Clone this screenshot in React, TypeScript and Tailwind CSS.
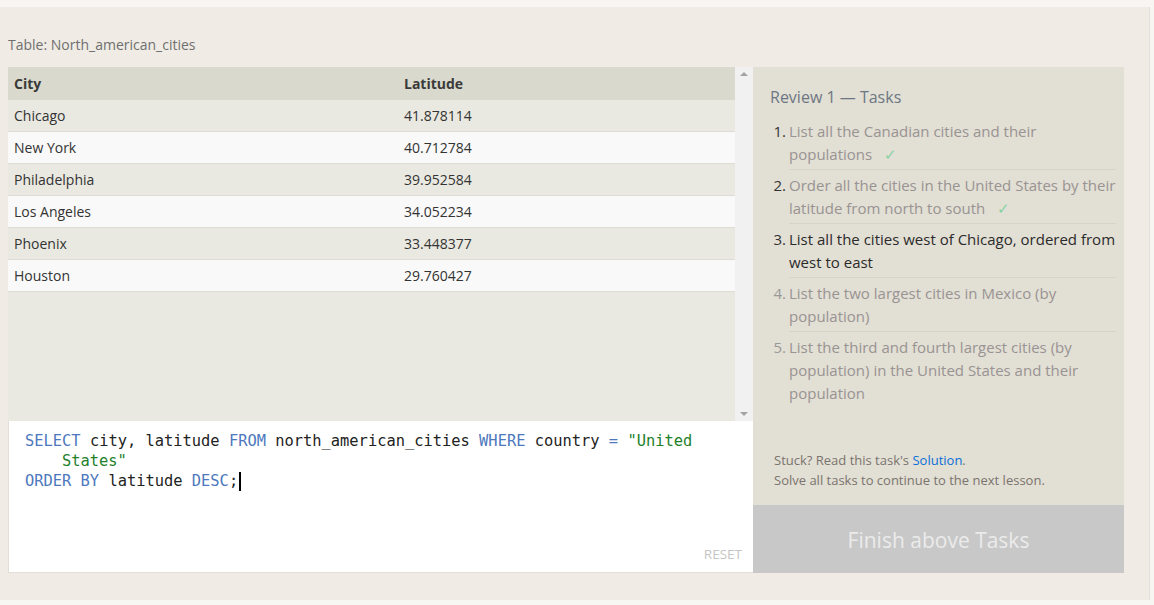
const rows = [
  ['Chicago', '41.878114'],
  ['New York', '40.712784'],
  ['Philadelphia', '39.952584'],
  ['Los Angeles', '34.052234'],
  ['Phoenix', '33.448377'],
  ['Houston', '29.760427'],
];

const tasks = [
  { text: 'List all the Canadian cities and their populations', done: true },
  { text: 'Order all the cities in the United States by their latitude from north to south', done: true },
  { text: 'List all the cities west of Chicago, ordered from west to east', active: true },
  { text: 'List the two largest cities in Mexico (by population)' },
  { text: 'List the third and fourth largest cities (by population) in the United States and their population' },
];

const kw = 'text-[#4d78bd]';
const str = 'text-[#23802a]';

export default function App() {
  return (
    <div className="h-[605px] w-full bg-[#f7f6f3] pt-[7px] font-['Segoe_UI','Open_Sans',sans-serif]">
      <div className="h-[593px] w-[1150px] border-r border-[#e3e0da] bg-[#f0ece5] pl-[8px]">
        <div className="h-[60px] pt-[28px] text-[14px] leading-[20px] text-[#6f6f6f]">
          Table: North_american_cities
        </div>

        <div className="flex">
          {/* left: results + editor */}
          <div className="w-[745px]">
            <div className="flex h-[354px]">
              <div className="w-[727px] bg-[#eae9e1]">
                <div className="flex h-[33px] items-center bg-[#dad9cd] text-[14px] font-bold text-[#3a3a3a]">
                  <div className="w-[396px] pl-[6px]">City</div>
                  <div>Latitude</div>
                </div>
                {rows.map(([city, lat], i) => (
                  <div
                    key={city}
                    className={`flex h-[32px] items-center border-b border-[#dedcd5] text-[14px] text-[#333] ${
                      i % 2 === 0 ? 'bg-[#eae9e1]' : 'bg-[#f9f9f9]'
                    }`}
                  >
                    <div className="w-[396px] pl-[6px]">{city}</div>
                    <div>{lat}</div>
                  </div>
                ))}
              </div>
              {/* scrollbar */}
              <div className="flex w-[18px] flex-col items-center justify-between bg-[#f1f1f1] py-[5px]">
                <div className="h-0 w-0 border-x-[4px] border-b-[4px] border-x-transparent border-b-[#a3a3a3]" />
                <div className="h-0 w-0 border-x-[4px] border-t-[4px] border-x-transparent border-t-[#a3a3a3]" />
              </div>
            </div>

            {/* editor */}
            <div className="relative h-[152px] border-b border-l border-[#e3dfd7] bg-white pl-[16px] pt-[10px] font-['DejaVu_Sans_Mono',monospace] text-[15.4px] leading-[20px] text-[#222]">
              <div>
                <span className={kw}>SELECT</span> city, latitude <span className={kw}>FROM</span> north_american_cities{' '}
                <span className={kw}>WHERE</span> country <span className={kw}>=</span>{' '}
                <span className={str}>"United</span>
              </div>
              <div className="pl-[37px]">
                <span className={str}>States"</span>
              </div>
              <div className="flex items-center">
                <span className={kw}>ORDER BY</span>&nbsp;latitude&nbsp;<span className={kw}>DESC</span>;
                <span className="ml-[1px] inline-block h-[19px] w-[2px] bg-black" />
              </div>
              <div className="absolute bottom-[8px] right-[11px] font-['Segoe_UI','Open_Sans',sans-serif] text-[13.5px] text-[#c6c6c6]">
                RESET
              </div>
            </div>
          </div>

          {/* right: tasks */}
          <div className="flex h-[506px] w-[371px] flex-col bg-[#e2dfd4]">
            <div className="flex-1 pl-[17px] pr-[8px] pt-[19px]">
              <div className="text-[16px] leading-[22px] text-[#6d7783]">Review 1 — Tasks</div>
              <ol className="mt-[8px] text-[15px] leading-[23px]">
                {tasks.map((t, i) => (
                  <li key={i} className="flex">
                    <span
                      className={`w-[19px] shrink-0 pr-[3px] pt-[4px] text-right ${
                        t.done || t.active ? 'text-[#333]' : 'text-[#999]'
                      }`}
                    >
                      {i + 1}.
                    </span>
                    <div
                      className={`flex-1 pb-[3px] pt-[4px] ${i < tasks.length - 1 ? 'border-b border-[#d6d3c8]' : ''} ${
                        t.active ? 'text-[#2b2b2b]' : 'text-[#999393]'
                      }`}
                    >
                      {t.text}
                      {t.done && <span className="ml-[12px] text-[#86d3a3]">✓</span>}
                    </div>
                  </li>
                ))}
              </ol>
            </div>
            <div className="pb-[15px] pl-[21px] text-[13px] leading-[20px] text-[#7a746e]">
              <div>
                Stuck? Read this task's <span className="text-[#0b6fd8]">Solution</span>.
              </div>
              <div>Solve all tasks to continue to the next lesson.</div>
            </div>
            <div className="flex h-[68px] items-center justify-center bg-[#c8c8c8] pt-[4px] text-[21px] text-[#ebebeb]">
              Finish above Tasks
            </div>
          </div>
        </div>
      </div>
    </div>
  );
}
